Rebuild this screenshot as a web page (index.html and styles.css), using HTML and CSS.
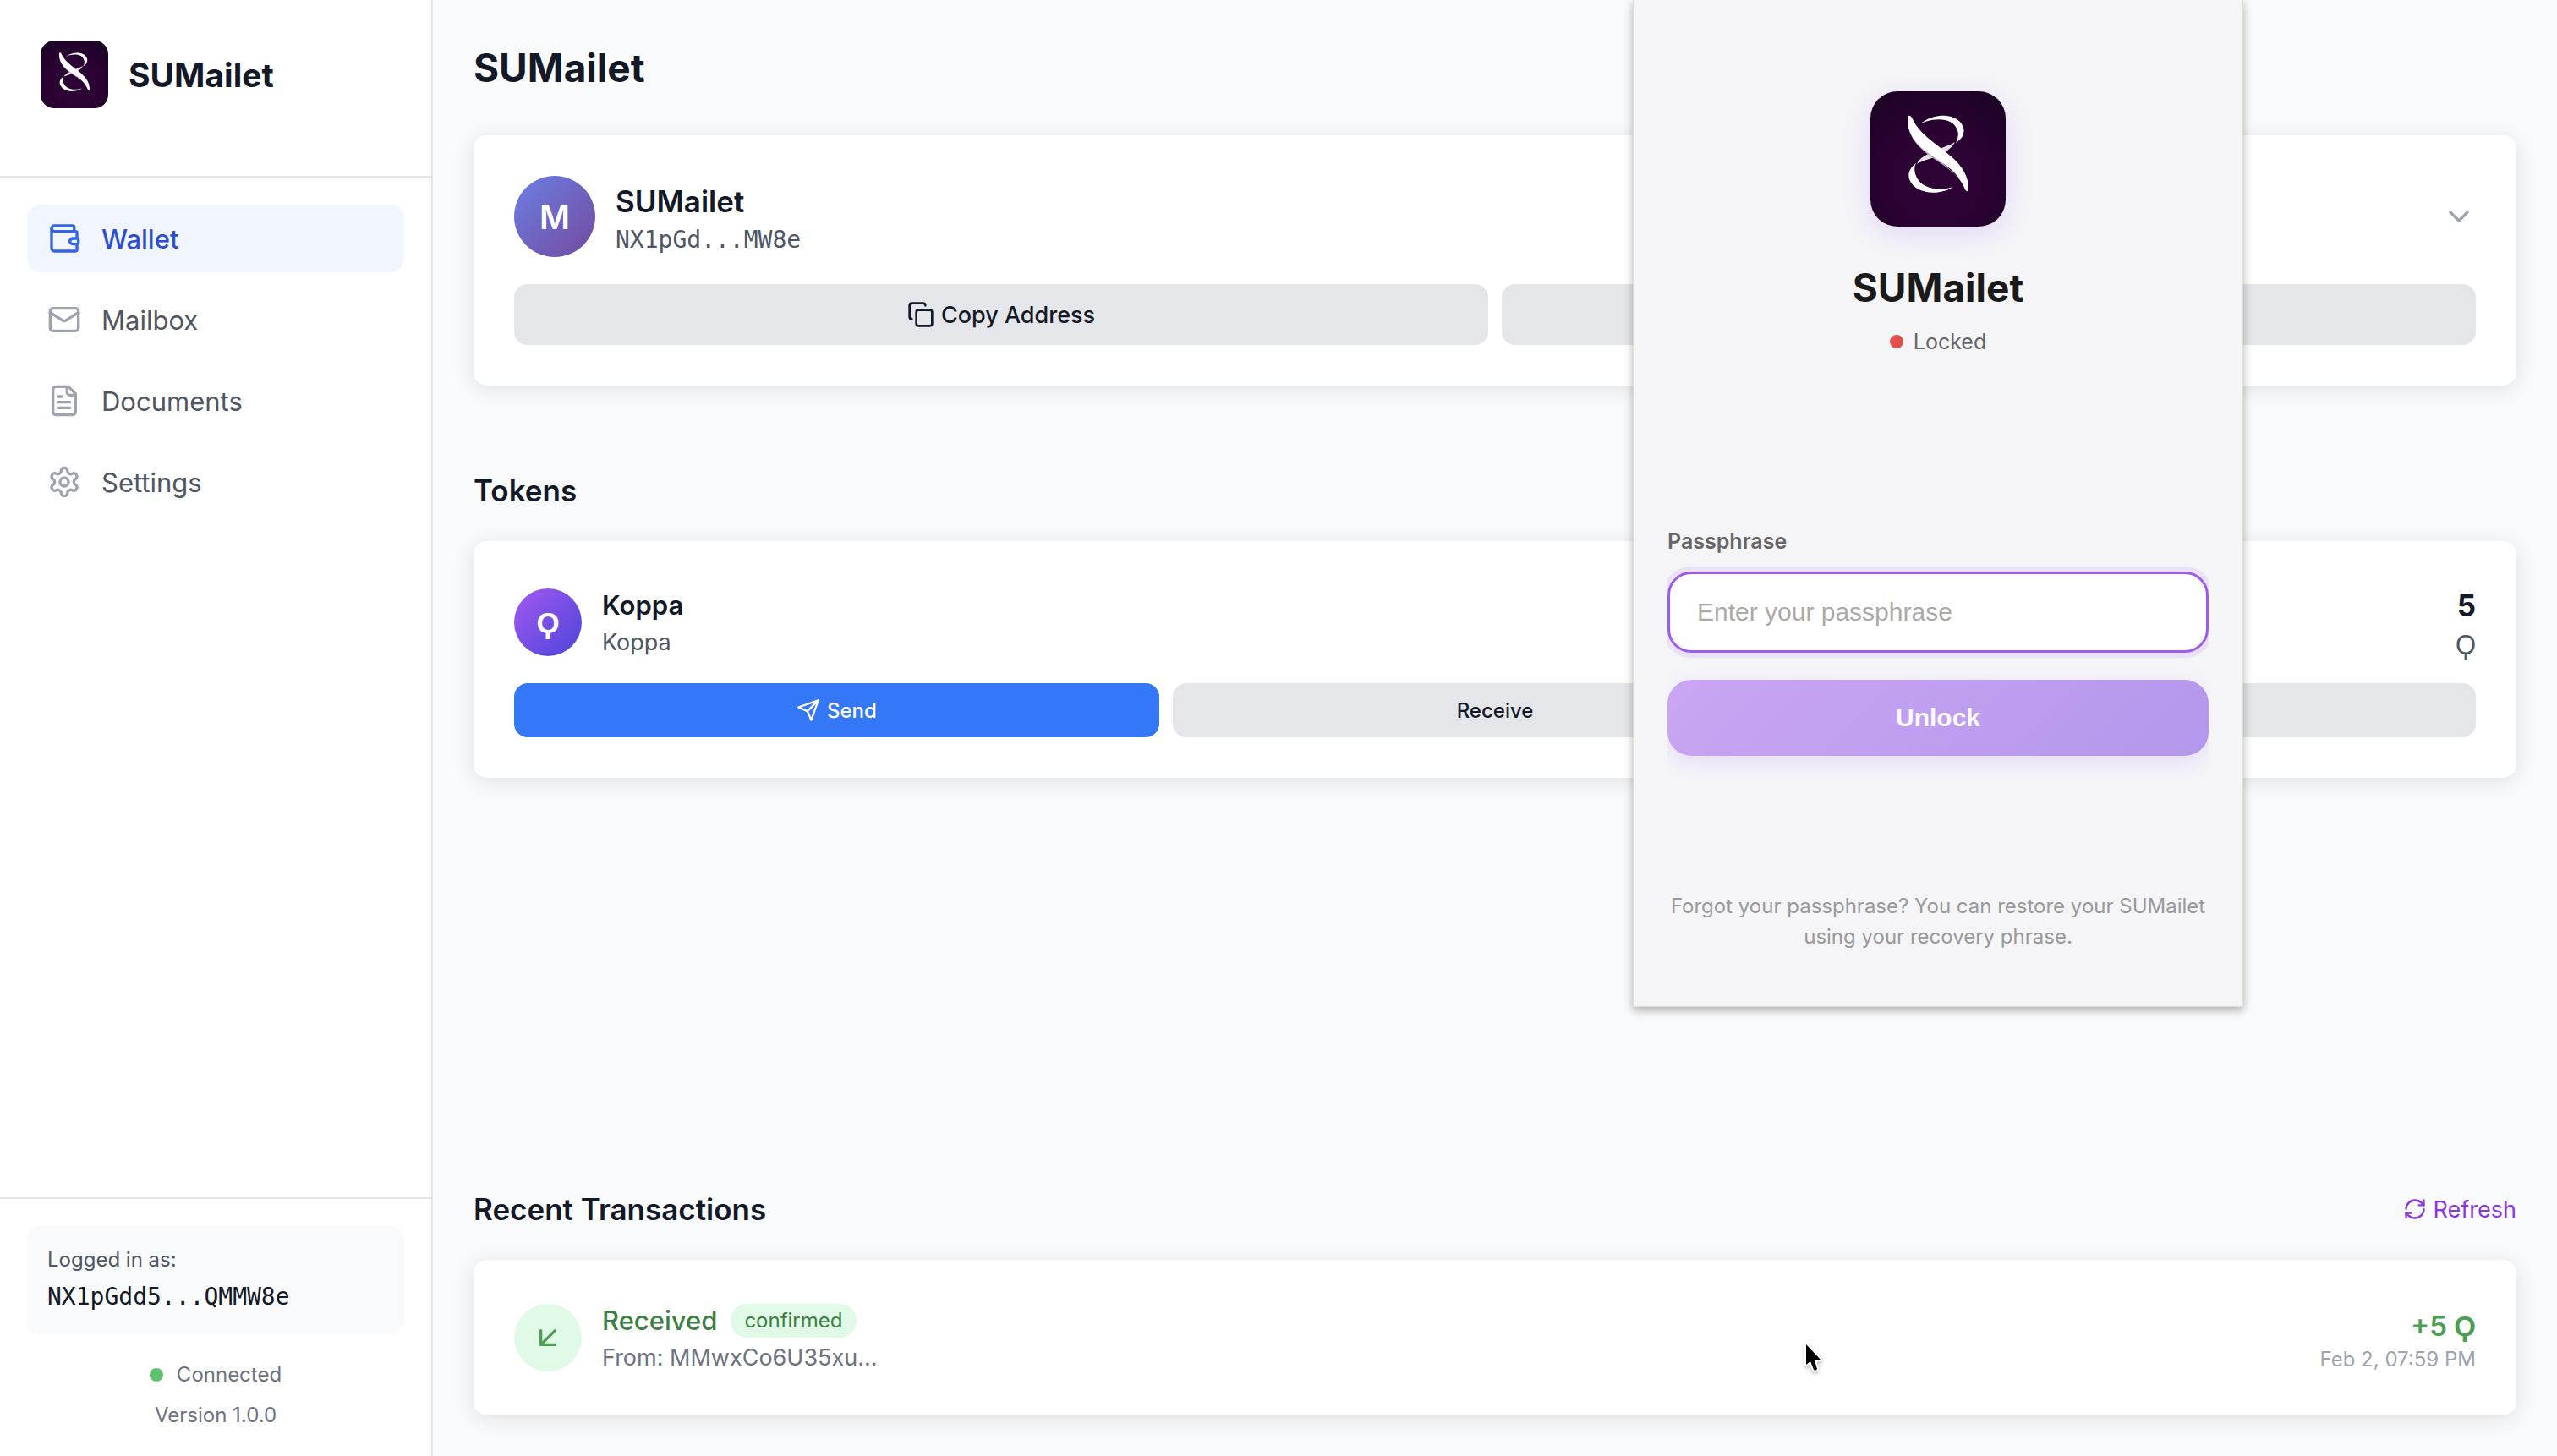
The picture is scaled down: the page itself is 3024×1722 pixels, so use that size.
FILE: index.html
```html
<!DOCTYPE html>
<html lang="en">
<head>
  <meta charset="UTF-8">
  <meta name="viewport" content="width=device-width, initial-scale=1.0">
  <title>SUMailet</title>
  <link rel="stylesheet" href="styles.css">
</head>
<body>
  <!-- Shared logo -->
  <svg class="defs" aria-hidden="true">
    <defs>
      <radialGradient id="logo-bg" cx="50%" cy="65%" r="75%">
        <stop offset="0" stop-color="#2f0336"/>
        <stop offset="0.5" stop-color="#2a0232"/>
        <stop offset="1" stop-color="#1c0224"/>
      </radialGradient>
      <symbol id="logo" viewBox="0 0 160 160">
        <rect width="160" height="160" fill="url(#logo-bg)"/>
        <path fill="#e6e0e8" d="M100 60C92 65 84 66 76 71C68 74 58 78 55 86C60 82 70 81 78 76C88 73 97 67 100 60Z"/>
        <path fill="#fff" d="M60 38C68 31 80 28 90 29C104 30 113 41 110 50C109 55 105 58 101 61C104 55 105 49 102 44C97 32 78 30 60 38Z"/>
        <path fill="#fff" d="M54 85C46 91 44 98 46 104C51 117 68 122 82 119C89 118 94 116 98 113C80 119 62 114 56 104C52 97 51 91 54 85Z"/>
        <path fill="#b5a9b8" d="M44 34C44 56 60 70 80 83C95 93 106 102 113 117L110 108L60 60Z"/>
        <path fill="#fff" d="M44 30Q46 27 49 31C57 49 72 58 88 71C104 83 117 97 116 117Q114 120 112 116C106 100 95 91 80 81C60 68 43 55 44 30Z"/>
      </symbol>
    </defs>
  </svg>

  <div class="app">
    <!-- Sidebar -->
    <aside class="sidebar">
      <div class="brand">
        <svg class="brand-logo" aria-hidden="true"><use href="#logo"/></svg>
        <span>SUMailet</span>
      </div>

      <nav class="nav">
        <a href="#wallet" class="nav-item active">
          <svg class="icon" viewBox="0 0 24 24"><path d="M19 7V4a1 1 0 0 0-1-1H5a2 2 0 0 0 0 4h15a1 1 0 0 1 1 1v4h-3a2 2 0 0 0 0 4h3a1 1 0 0 0 1-1v-2a1 1 0 0 0-1-1"/><path d="M3 5v14a2 2 0 0 0 2 2h15a1 1 0 0 0 1-1v-4"/></svg>
          Wallet
        </a>
        <a href="#mailbox" class="nav-item">
          <svg class="icon" viewBox="0 0 24 24"><rect x="2" y="4" width="20" height="16" rx="2"/><path d="m22 7-8.97 5.7a1.94 1.94 0 0 1-2.06 0L2 7"/></svg>
          Mailbox
        </a>
        <a href="#documents" class="nav-item">
          <svg class="icon" viewBox="0 0 24 24"><path d="M15 2H6a2 2 0 0 0-2 2v16a2 2 0 0 0 2 2h12a2 2 0 0 0 2-2V7Z"/><path d="M14 2v4a2 2 0 0 0 2 2h4"/><path d="M10 9H8"/><path d="M16 13H8"/><path d="M16 17H8"/></svg>
          Documents
        </a>
        <a href="#settings" class="nav-item">
          <svg class="icon" viewBox="0 0 24 24"><path d="M12.22 2h-.44a2 2 0 0 0-2 2v.18a2 2 0 0 1-1 1.73l-.43.25a2 2 0 0 1-2 0l-.15-.08a2 2 0 0 0-2.73.73l-.22.38a2 2 0 0 0 .73 2.73l.15.1a2 2 0 0 1 1 1.72v.51a2 2 0 0 1-1 1.74l-.15.09a2 2 0 0 0-.73 2.73l.22.38a2 2 0 0 0 2.73.73l.15-.08a2 2 0 0 1 2 0l.43.25a2 2 0 0 1 1 1.73V20a2 2 0 0 0 2 2h.44a2 2 0 0 0 2-2v-.18a2 2 0 0 1 1-1.73l.43-.25a2 2 0 0 1 2 0l.15.08a2 2 0 0 0 2.73-.73l.22-.39a2 2 0 0 0-.73-2.73l-.15-.08a2 2 0 0 1-1-1.74v-.5a2 2 0 0 1 1-1.74l.15-.09a2 2 0 0 0 .73-2.73l-.22-.38a2 2 0 0 0-2.73-.73l-.15.08a2 2 0 0 1-2 0l-.43-.25a2 2 0 0 1-1-1.73V4a2 2 0 0 0-2-2z"/><circle cx="12" cy="12" r="3"/></svg>
          Settings
        </a>
      </nav>

      <div class="sidebar-footer">
        <div class="account">
          <span class="account-label">Logged in as:</span>
          <span class="account-address">NX1pGdd5...QMMW8e</span>
        </div>
        <div class="connection"><span class="dot dot-green"></span>Connected</div>
        <div class="version">Version 1.0.0</div>
      </div>
    </aside>

    <!-- Main content -->
    <main class="main">
      <h1>SUMailet</h1>

      <section class="card">
        <div class="card-row">
          <div class="avatar">M</div>
          <div class="card-info">
            <div class="wallet-name">SUMailet</div>
            <div class="wallet-address">NX1pGd...MW8e</div>
          </div>
          <button class="toggle" aria-label="Expand">
            <svg class="icon" viewBox="0 0 24 24"><path d="m6 9 6 6 6-6"/></svg>
          </button>
        </div>
        <div class="actions">
          <button class="btn">
            <svg class="icon" viewBox="0 0 24 24"><rect x="8" y="8" width="14" height="14" rx="2"/><path d="M4 16c-1.1 0-2-.9-2-2V4c0-1.1.9-2 2-2h10c1.1 0 2 .9 2 2"/></svg>
            Copy Address
          </button>
          <button class="btn" aria-label="More"></button>
        </div>
      </section>

      <h2 class="tokens-title">Tokens</h2>
      <section class="card">
        <div class="card-row">
          <div class="token-icon">Ϙ</div>
          <div class="card-info">
            <div class="token-name">Koppa</div>
            <div class="token-sub">Koppa</div>
          </div>
          <div class="balance">
            <div class="balance-value">5</div>
            <div class="balance-unit">Ϙ</div>
          </div>
        </div>
        <div class="actions actions-small">
          <button class="btn btn-primary">
            <svg class="icon" viewBox="0 0 24 24"><path d="m22 2-7 20-4-9-9-4Z"/><path d="M22 2 11 13"/></svg>
            Send
          </button>
          <button class="btn">Receive</button>
          <button class="btn" aria-label="Details"></button>
        </div>
      </section>

      <div class="recent-head">
        <h2>Recent Transactions</h2>
        <button class="refresh">
          <svg class="icon" viewBox="0 0 24 24"><path d="M3 12a9 9 0 0 1 9-9 9.75 9.75 0 0 1 6.74 2.74L21 8"/><path d="M21 3v5h-5"/><path d="M21 12a9 9 0 0 1-9 9 9.75 9.75 0 0 1-6.74-2.74L3 16"/><path d="M8 16H3v5"/></svg>
          Refresh
        </button>
      </div>
      <section class="card">
        <div class="card-row tx-row">
          <div class="tx-icon">
            <svg class="icon" viewBox="0 0 24 24"><path d="M17 7 7 17"/><path d="M17 17H7V7"/></svg>
          </div>
          <div class="tx-info">
            <div class="tx-title">Received <span class="badge">confirmed</span></div>
            <div class="tx-from">From: MMwxCo6U35xu...</div>
          </div>
          <div class="tx-side">
            <div class="tx-amount">+5 Ϙ</div>
            <div class="tx-date">Feb 2, 07:59 PM</div>
          </div>
        </div>
      </section>
    </main>
  </div>

  <!-- Extension popup -->
  <div class="popup">
    <svg class="popup-logo" aria-hidden="true"><use href="#logo"/></svg>
    <div class="popup-title">SUMailet</div>
    <div class="popup-status"><span class="dot dot-red"></span>Locked</div>
    <form class="unlock-form">
      <label for="passphrase">Passphrase</label>
      <input id="passphrase" type="password" placeholder="Enter your passphrase">
      <button type="button" class="unlock">Unlock</button>
    </form>
    <p class="popup-hint">Forgot your passphrase? You can restore your SUMailet using your recovery phrase.</p>
  </div>

  <!-- Pointer -->
  <svg class="pointer" viewBox="0 0 28 42" aria-hidden="true">
    <path d="M4 5V29L9 25L13 35Q15 37 17 34L14 24L21 23Z" fill="#000" stroke="#fff" stroke-width="4" stroke-linejoin="round" paint-order="stroke"/>
  </svg>
</body>
</html>
```

FILE: styles.css
```css
:root {
  --bg: #f9fafc;
  --border: #e5e6ea;
  --text: #131926;
  --text-muted: #4f5763;
  --text-light: #6d7380;
  --icon-gray: #9ea3af;
  --green: #4d9f54;
  --green-dark: #3c7f43;
  --green-bg: #e1fae8;
  --purple: #8a37e0;
  --sans: Inter, "Liberation Sans", "DejaVu Sans", sans-serif;
  --mono: "DejaVu Sans Mono", monospace;
}

* {
  box-sizing: border-box;
}

body {
  margin: 0;
  background-color: var(--bg);
  color: var(--text);
  font-family: var(--sans);
  font-size: 28px;
}

button {
  border: none;
  background: none;
  color: inherit;
  font-family: inherit;
  padding: 0;
  cursor: pointer;
}

h1, h2, p {
  margin: 0;
}

.defs {
  position: absolute;
  width: 0;
  height: 0;
}

.icon {
  width: 40px;
  height: 40px;
  flex-shrink: 0;
  fill: none;
  stroke: currentColor;
  stroke-width: 2;
  stroke-linecap: round;
  stroke-linejoin: round;
}

.dot {
  width: 16px;
  height: 16px;
  border-radius: 50%;
}

.dot-green {
  background: #5fc16c;
}

.dot-red {
  background: #de514c;
}

.app {
  display: flex;
  min-height: 100vh;
}

/* Sidebar */
.sidebar {
  display: flex;
  flex-direction: column;
  width: 512px;
  flex-shrink: 0;
  background: #fff;
  border-right: 2px solid var(--border);
}

.brand {
  display: flex;
  align-items: center;
  gap: 24px;
  padding: 48px 48px 80px;
  border-bottom: 2px solid var(--border);
  font-size: 39px;
  font-weight: 700;
}

.brand-logo {
  width: 80px;
  height: 80px;
  border-radius: 16px;
}

.nav {
  display: flex;
  flex-direction: column;
  gap: 16px;
  padding: 32px;
}

.nav-item {
  display: flex;
  align-items: center;
  gap: 24px;
  height: 80px;
  padding: 0 24px;
  border-radius: 16px;
  color: var(--text-muted);
  font-size: 31px;
  text-decoration: none;
}

.nav-item .icon {
  color: var(--icon-gray);
}

.nav-item.active {
  background: #f0f5fe;
  color: #2b4fd0;
  font-weight: 500;
}

.nav-item.active .icon {
  color: #3564e6;
}

.sidebar-footer {
  margin-top: auto;
  padding: 32px 32px 24px;
  border-top: 2px solid var(--border);
  color: var(--text-light);
  font-size: 24px;
  text-align: center;
}

.account {
  display: flex;
  flex-direction: column;
  gap: 8px;
  padding: 24px;
  border-radius: 16px;
  background: var(--bg);
  text-align: left;
}

.account-label {
  color: var(--text-muted);
  line-height: 32px;
}

.account-address {
  color: var(--text);
  font-family: var(--mono);
  font-size: 28px;
  line-height: 40px;
}

.connection {
  display: flex;
  align-items: center;
  justify-content: center;
  gap: 16px;
  margin-top: 24px;
  line-height: 48px;
}

.version {
  line-height: 48px;
}

/* Main */
.main {
  display: flex;
  flex-direction: column;
  flex: 1;
  padding: 48px;
}

h1 {
  margin-bottom: 48px;
  font-size: 46px;
  font-weight: 700;
  line-height: 64px;
}

h2 {
  font-size: 35px;
  font-weight: 600;
  line-height: 56px;
}

.tokens-title {
  margin: 96px 0 32px;
}

.card {
  padding: 48px;
  border-radius: 16px;
  background: #fff;
  box-shadow: 0 4px 24px rgba(0, 0, 0, 0.1);
}

.card-row {
  display: flex;
  align-items: center;
  gap: 24px;
  min-height: 96px;
}

.card-info {
  flex: 1;
  padding-top: 4px;
}

.avatar, .token-icon, .tx-icon {
  display: flex;
  align-items: center;
  justify-content: center;
  border-radius: 50%;
  color: #fff;
  font-weight: 600;
}

.avatar {
  width: 96px;
  height: 96px;
  background: linear-gradient(135deg, #6b7fe3, #734a9f);
  font-size: 39px;
}

.wallet-name {
  font-size: 35px;
  font-weight: 600;
  line-height: 52px;
}

.wallet-address {
  color: var(--text-muted);
  font-family: var(--mono);
  font-size: 28px;
  line-height: 40px;
}

.toggle {
  display: flex;
  color: var(--icon-gray);
}

.actions {
  display: flex;
  gap: 16px;
  margin-top: 32px;
}

.btn {
  display: flex;
  align-items: center;
  justify-content: center;
  flex: 1;
  gap: 8px;
  height: 72px;
  border-radius: 16px;
  background: var(--border);
  font-size: 27px;
  font-weight: 500;
}

.btn .icon {
  width: 32px;
  height: 32px;
}

.actions-small {
  margin-top: 24px;
}

.actions-small .btn {
  height: 64px;
  font-size: 24px;
}

.actions-small .icon {
  width: 28px;
  height: 28px;
}

.btn-primary {
  background: #3478f7;
  color: #fff;
}

.token-icon {
  width: 80px;
  height: 80px;
  background: linear-gradient(135deg, #a259f0, #4d45da);
  font-size: 35px;
}

.token-name {
  font-size: 31px;
  font-weight: 600;
  line-height: 44px;
}

.token-sub {
  color: var(--text-muted);
  font-size: 27px;
  line-height: 44px;
}

.balance {
  padding-top: 4px;
  text-align: right;
}

.balance-value {
  font-size: 35px;
  font-weight: 700;
  line-height: 48px;
}

.balance-unit {
  color: var(--text-muted);
  font-size: 31px;
  line-height: 44px;
}

.recent-head {
  display: flex;
  align-items: center;
  justify-content: space-between;
  margin: auto 0 32px;
}

.refresh {
  display: flex;
  align-items: center;
  gap: 8px;
  color: var(--purple);
  font-size: 27px;
}

.refresh .icon {
  width: 28px;
  height: 28px;
}

.tx-row {
  min-height: 88px;
}

.tx-icon {
  width: 80px;
  height: 80px;
  background: var(--green-bg);
  color: var(--green);
}

.tx-info {
  flex: 1;
}

.tx-title {
  display: flex;
  align-items: center;
  gap: 16px;
  color: var(--green-dark);
  font-size: 31px;
  font-weight: 500;
  line-height: 48px;
}

.badge {
  padding: 0 16px;
  border-radius: 20px;
  background: var(--green-bg);
  font-size: 24px;
  font-weight: 400;
  line-height: 40px;
}

.tx-from {
  color: var(--text-light);
  font-size: 27px;
  line-height: 40px;
}

.tx-side {
  padding-top: 8px;
  text-align: right;
}

.tx-amount {
  color: var(--green);
  font-size: 33px;
  font-weight: 600;
  line-height: 44px;
}

.tx-date {
  color: var(--icon-gray);
  font-size: 24px;
  line-height: 36px;
}

/* Extension popup */
.popup {
  position: absolute;
  top: 0;
  right: 371px;
  width: 722px;
  padding: 108px 40px 64px;
  border: 1px solid #e6ddd0;
  border-top: none;
  background: #f5f5f8;
  box-shadow: 0 4px 10px rgba(0, 0, 0, 0.3);
  text-align: center;
}

.popup-logo {
  display: block;
  width: 160px;
  height: 160px;
  margin: 0 auto;
  border-radius: 32px;
  box-shadow: 0 8px 32px rgba(150, 80, 240, 0.18);
}

.popup-title {
  margin-top: 40px;
  color: #1a1a1a;
  font-size: 46px;
  font-weight: 700;
  line-height: 64px;
}

.popup-status {
  display: flex;
  align-items: center;
  justify-content: center;
  gap: 12px;
  margin-top: 12px;
  color: #666;
  font-size: 25px;
  line-height: 40px;
}

.unlock-form {
  display: flex;
  flex-direction: column;
  margin-top: 196px;
  padding-bottom: 32px;
  overflow-x: clip;
  text-align: left;
}

.unlock-form label {
  color: #666;
  font-size: 25px;
  font-weight: 600;
  line-height: 40px;
}

.unlock-form input {
  height: 96px;
  margin-top: 16px;
  padding: 0 32px;
  border: 3px solid #a05bee;
  border-radius: 28px;
  outline: none;
  background: #fff;
  box-shadow: 0 0 0 6px rgba(160, 90, 240, 0.12);
  font-family: "Liberation Sans", sans-serif;
  font-size: 30px;
}

.unlock-form input::placeholder {
  color: #aaa;
}

.unlock {
  height: 90px;
  margin-top: 32px;
  border-radius: 28px;
  background: linear-gradient(135deg, #caa6f3, #b397ec);
  box-shadow: 0 8px 24px rgba(150, 80, 240, 0.15);
  color: #fbf9fe;
  font-family: "Liberation Sans", sans-serif;
  font-size: 30px;
  font-weight: 700;
}

.popup-hint {
  margin-top: 128px;
  color: #999;
  font-size: 24px;
  line-height: 36px;
}

.pointer {
  position: absolute;
  top: 1585px;
  left: 2132px;
  width: 28px;
  height: 42px;
  filter: drop-shadow(0 2px 2px rgba(0, 0, 0, 0.3));
}
```
